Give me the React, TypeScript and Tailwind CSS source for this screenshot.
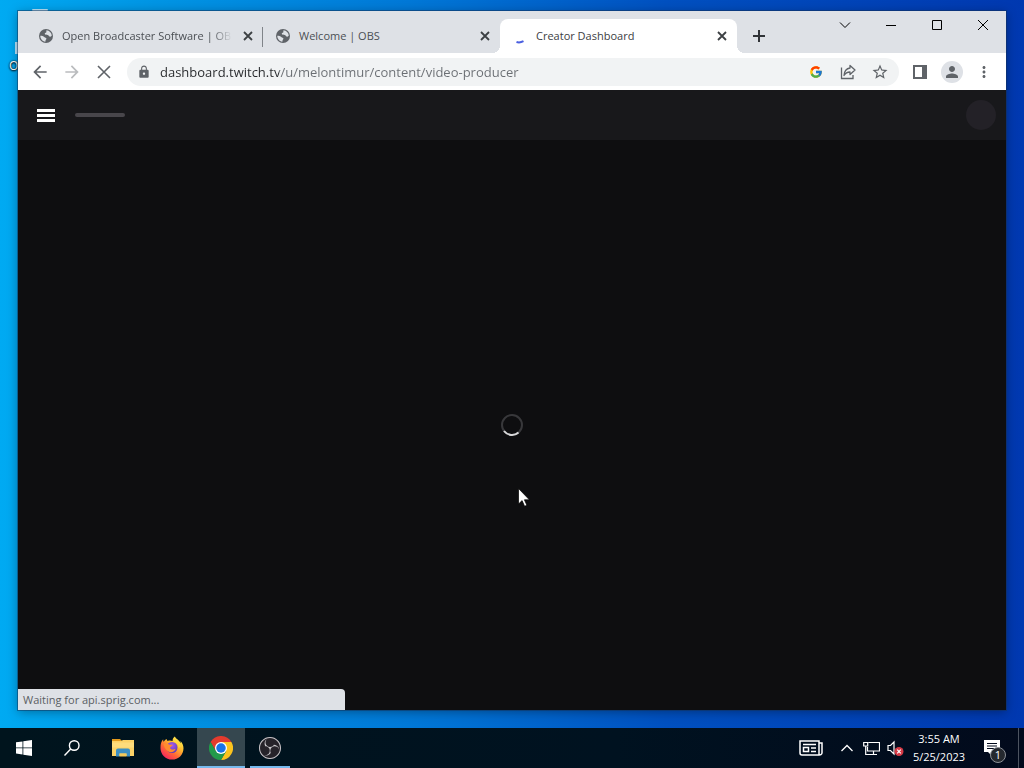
import type { ReactNode } from "react";
import { FcGoogle } from "react-icons/fc";
import {
  MdArrowBack,
  MdArrowForward,
  MdLock,
  MdMoreVert,
  MdPerson,
  MdStarBorder,
} from "react-icons/md";
import { SiObsstudio } from "react-icons/si";

function GlobeIcon() {
  return (
    <svg viewBox="0 0 16 16" className="size-4">
      <circle cx="8" cy="8" r="7" fill="#5f6368" />
      <path d="M8.500 2.300c2.900.2 5 2.400 5.300 5.200-.8.900-1.400 1.500-2.300 1.100-.8-.4-.7-1.500-1.700-1.700-1.200-.2-2.600.2-3-.8-.3-.9.700-1.200 1.400-1.600.6-.4-.2-1.400.3-2.200z" fill="#dee1e6" />
      <path d="M2.300 7.800c1.600.1 3.200.3 4 1.200.8.800 1.900.7 2.100 1.600.2.800-.8 1.300-.9 2.100-.1.500.1.900-.3 1-2.800-.4-4.900-2.800-4.900-5.900z" fill="#dee1e6" />
    </svg>
  );
}

function Tab({ title, icon, active = false, divider = false }: { title: string; icon: ReactNode; active?: boolean; divider?: boolean }) {
  return (
    <div
      role="tab"
      aria-selected={active}
      className={`relative flex h-full w-[237px] shrink items-center rounded-t-lg pr-[7px] pl-3 ${active ? "bg-white" : ""}`}
    >
      {active && (
        <>
          <span className="absolute bottom-0 -left-2 size-2 bg-[radial-gradient(circle_at_0_0,#dee1e6_8px,white_8px)]" />
          <span className="absolute -right-2 bottom-0 size-2 bg-[radial-gradient(circle_at_100%_0,#dee1e6_8px,white_8px)]" />
        </>
      )}
      <span className="flex size-4 shrink-0 items-center justify-center">{icon}</span>
      <span className={`ml-2 min-w-0 flex-1 text-[11px] leading-4 whitespace-nowrap ${active ? "text-[#3c4043]" : "text-[#4b4f54]"} ${divider ? "[mask-image:linear-gradient(to_right,black_88%,transparent)]" : ""}`}>
        {title}
      </span>
      <button aria-label={`Close ${title}`} className="ml-2 flex size-4 shrink-0 items-center justify-center text-[#3c4043]">
        <svg viewBox="0 0 16 16" className="size-4" stroke="currentColor" strokeWidth="1.800">
          <path d="M4 4l8 8M12 4l-8 8" />
        </svg>
      </button>
      {divider && <span className="absolute top-2 right-0 h-5 w-px bg-[#808489]" />}
    </div>
  );
}

function WindowButton({ label, path }: { label: string; path: string }) {
  return (
    <button aria-label={label} className="flex h-7 w-[46px] items-center justify-center text-black">
      <svg viewBox="0 0 12 12" className="size-3" fill="none" stroke="currentColor" strokeWidth="1">
        <path d={path} />
      </svg>
    </button>
  );
}

function ToolButton({ label, children, dim = false }: { label: string; children: ReactNode; dim?: boolean }) {
  return (
    <button aria-label={label} className={`flex h-7 w-8 shrink-0 items-center justify-center ${dim ? "text-[#babcbe]" : "text-[#5f6368]"}`}>
      {children}
    </button>
  );
}

function TaskButton({ label, children, state = "" }: { label: string; children: ReactNode; state?: "" | "active" | "open" }) {
  return (
    <button
      aria-label={label}
      className={`relative flex h-10 w-12 items-center justify-center text-white ${state === "active" ? "bg-[#35474f]" : ""}`}
    >
      {children}
      {state === "active" && <span className="absolute inset-x-0 bottom-0 h-0.5 bg-[#76b9ed]" />}
      {state === "open" && <span className="absolute inset-x-1 bottom-0 h-0.5 bg-[#76b9ed]" />}
    </button>
  );
}

function FolderIcon() {
  return (
    <svg viewBox="0 0 22 20" className="h-5 w-[22px]">
      <path d="M0 1h8l2 2H0z" fill="#e39a1c" />
      <path d="M0 3h9l2-1h11v16H0z" fill="#fbd267" />
      <path d="M0 4.500h22v5H0z" fill="#fddc7c" />
      <path d="M4 18.500v-6a2 2 0 0 1 2-2h10a2 2 0 0 1 2 2v6h-3.500v-3h-7v3z" fill="#3b8fc4" />
      <path d="M7.500 15.500h7v3h-7z" fill="#f3c95c" />
    </svg>
  );
}

function FirefoxIcon() {
  return (
    <svg viewBox="0 0 24 24" className="size-6">
      <defs>
        <linearGradient id="fox" x1="0.85" y1="0.1" x2="0.2" y2="0.95">
          <stop offset="0" stopColor="#fff14f" />
          <stop offset="0.35" stopColor="#ffb42e" />
          <stop offset="0.65" stopColor="#ff6636" />
          <stop offset="1" stopColor="#f5245f" />
        </linearGradient>
        <radialGradient id="orb" cx="0.5" cy="0.3" r="0.7">
          <stop offset="0" stopColor="#a45bf0" />
          <stop offset="1" stopColor="#5b3ab4" />
        </radialGradient>
      </defs>
      <path
        d="M14.800 0.500c-1.600 1.100-2.300 2.900-2.200 4.600-1.600-.8-3.500-.9-4.800-.2C7 4.300 6.700 3.700 6.700 2.900 5.300 3.600 4.300 4.800 3.800 5.700 3.200 5.100 3.100 4.100 3.200 3.300 1.200 5.200.4 8.300.5 12A11.500 11.500 0 0 0 12 23.600c6.400 0 11.500-4.900 11.500-11.400 0-2.800-1.200-5.800-3.100-7.300.3.800.4 1.600.4 2.300-1.500-3.200-4.900-4.100-6-6.700z"
        fill="url(#fox)"
      />
      <circle cx="12" cy="11.500" r="5.500" fill="url(#orb)" />
      <path d="M3.500 8.200c2.700-1 4.600-.5 6.200.5h3.100c-.2 1.300-2.500 1.500-2.800 3.200 1 1.600 3.200 2.200 5.600.9-1.100 3.200-5 4.500-8 2.200C5 13.300 4.300 10.600 3.500 8.200z" fill="#ff8b2f" />
      <path d="M13.500 5.500c3.500 1 5.200 3.300 5 6.500l2.300-1.500c-.6-3-3-4.700-5.300-6.800z" fill="#ffd83f" />
    </svg>
  );
}

function ChromeIcon() {
  return (
    <svg viewBox="0 0 48 48" className="size-6">
      <path d="M24 12h20.800A24 24 0 0 0 3.200 12l10.400 18z" fill="#e33b2e" />
      <path d="M34.400 30 24 48a24 24 0 0 0 20.800-36H24z" fill="#fcc31e" />
      <path d="M13.600 30 3.200 12A24 24 0 0 0 24 48l10.400-18z" fill="#229a4a" />
      <circle cx="24" cy="24" r="12" fill="#fff" />
      <circle cx="24" cy="24" r="9.500" fill="#1a73e8" />
    </svg>
  );
}

function TrayIcons() {
  return (
    <>
      <button aria-label="News and interests" className="flex h-10 w-8 items-center justify-center">
        <svg viewBox="0 0 24 16" className="h-4 w-6" fill="none" stroke="currentColor" strokeWidth="1.500">
          <path d="M1 1h19v14H3a2 2 0 0 1-2-2zM20 3h3v10a2 2 0 0 1-3 1.500M4 4.500h13M12 8h5M12 11.500h5" />
          <path d="M4.500 7.500h5v4h-5z" />
        </svg>
      </button>
      <button aria-label="Show hidden icons" className="ml-2 flex h-10 w-6 items-center justify-center">
        <svg viewBox="0 0 12 12" className="size-3" fill="none" stroke="currentColor" strokeWidth="1.300">
          <path d="M.5 9 6 3.500 11.500 9" />
        </svg>
      </button>
      <button aria-label="Network" className="flex h-10 w-6 items-center justify-center">
        <svg viewBox="0 0 17 15" className="h-[15px] w-[17px]" fill="none" stroke="currentColor" strokeWidth="1.200">
          <path d="M5.500 1.500h11v8.500H4.500V6M10.500 10v3.500M6 13.500h8M.7 1.500h4v3.500h-4zM2.700 5v8.500h3.300" />
        </svg>
      </button>
      <button aria-label="Volume muted" className="flex h-10 w-6 items-center justify-center">
        <svg viewBox="0 0 17 16" className="h-4 w-[17px]" fill="none">
          <path d="M1 5.500h2.500L7 2v12l-3.500-3.500H1z" stroke="white" strokeWidth="1.200" />
          <circle cx="12" cy="11.500" r="4.500" fill="#d63a46" />
          <path d="m10.200 9.700 3.600 3.600m0-3.600-3.600 3.600" stroke="white" strokeWidth="1.200" />
        </svg>
      </button>
    </>
  );
}

export default function App() {
  return (
    <div className="flex min-h-screen flex-col bg-[#0078d4] font-['Open_Sans',sans-serif]">
      <div className="relative flex flex-1 flex-col bg-[linear-gradient(90deg,#00aaf2_0%,#0095e4_15%,#0078d7_40%,#0050c0_65%,#0038b0_100%)] px-[18px] pt-[11px] pb-[18px]">
        <span className="absolute top-[58px] left-[9px] text-xs leading-4 text-white [text-shadow:0_0_2px_black,0_1px_2px_black]">O</span>
        <span className="absolute top-[42px] left-[15px] h-3 w-[3px] bg-[#b9e3fa]" />
        <span className="absolute top-[9px] left-8 h-0.5 w-4 rounded-full bg-[#b9e3fa]" />

        <div className="relative flex flex-1 flex-col bg-[#0e0e10] shadow-[0_0_0_1px_rgba(20,50,90,0.5),0_2px_10px_rgba(0,0,0,0.35)]">
          <div className="flex h-[42px] bg-[#dee1e6]">
            <div role="tablist" className="flex min-w-0 pt-2 pl-2">
              <Tab title="Open Broadcaster Software | OB" icon={<GlobeIcon />} divider />
              <Tab title="Welcome | OBS" icon={<GlobeIcon />} />
              <Tab
                title="Creator Dashboard"
                active
                icon={
                  <svg viewBox="0 0 16 16" className="size-4" fill="none" stroke="#4a5fe0" strokeWidth="2">
                    <path d="M4.500 14c2.500.8 4.500.5 7-.8" />
                  </svg>
                }
              />
            </div>
            <button aria-label="New tab" className="mt-[11px] ml-2 flex size-7 shrink-0 items-center justify-center text-[#303337]">
              <svg viewBox="0 0 12 12" className="size-3" stroke="currentColor" strokeWidth="2">
                <path d="M6 0v12M0 6h12" />
              </svg>
            </button>
            <div className="ml-auto flex shrink-0">
              <WindowButton label="Search tabs" path="M1 3.500l5 5 5-5" />
              <WindowButton label="Minimize" path="M1 6.500h10" />
              <WindowButton label="Maximize" path="M1.500 1.500h9v9h-9z" />
              <WindowButton label="Close window" path="M1 1l10 10M11 1L1 11" />
            </div>
          </div>

          <div className="flex h-[37px] items-center bg-white px-1.5">
            <ToolButton label="Back"><MdArrowBack size={20} /></ToolButton>
            <ToolButton label="Forward" dim><MdArrowForward size={20} /></ToolButton>
            <ToolButton label="Stop loading">
              <svg viewBox="0 0 14 14" className="size-3.5" stroke="currentColor" strokeWidth="1.600">
                <path d="M1 1l12 12M13 1L1 13" />
              </svg>
            </ToolButton>
            <div className="ml-[7px] flex h-7 min-w-0 flex-1 items-center rounded-full bg-[#f1f3f4] pr-[3px] pl-2.5">
              <MdLock size={14} className="shrink-0 text-[#5f6368]" />
              <input
                aria-label="Address"
                readOnly
                value="dashboard.twitch.tv/u/melontimur/content/video-producer"
                className="ml-[9px] min-w-0 flex-1 bg-[linear-gradient(90deg,#26282b_119px,#6a6e73_119px)] bg-clip-text text-[13px] leading-5 text-transparent outline-none"
              />
              <ToolButton label="Search with Google"><FcGoogle size={14} /></ToolButton>
              <ToolButton label="Share this page">
                <svg viewBox="0 0 16 16" className="size-4" fill="none" stroke="currentColor" strokeWidth="1.300">
                  <path d="M1.500 3.500v11h11.500v-3.500" />
                  <path d="M10 1.500 15 6l-5 4.500V8C7.500 8 5.500 9 4 11.500 4.300 7.500 6.500 4.500 10 4z" strokeLinejoin="round" />
                </svg>
              </ToolButton>
              <ToolButton label="Bookmark this tab"><MdStarBorder size={18} /></ToolButton>
            </div>
            <div className="ml-[5px] flex shrink-0">
              <ToolButton label="Side panel">
                <svg viewBox="0 0 14 14" className="size-3.5">
                  <path d="M1 1h12v12H1z" fill="none" stroke="currentColor" strokeWidth="2" />
                  <path d="M9 1h4v12H9z" fill="currentColor" />
                </svg>
              </ToolButton>
              <ToolButton label="Profile">
                <span className="flex size-[22px] items-center justify-center rounded-full bg-[#dee1e6]"><MdPerson size={18} /></span>
              </ToolButton>
              <ToolButton label="Chrome menu"><MdMoreVert size={18} /></ToolButton>
            </div>
          </div>

          <header className="flex h-[50px] items-center bg-[#18181b] pr-2.5 pl-[19px]">
            <button aria-label="Open navigation" className="flex w-[18px] flex-col gap-0.5">
              <span className="h-[3px] bg-white" />
              <span className="h-[3px] bg-white" />
              <span className="h-[3px] bg-white" />
            </button>
            <span className="ml-5 h-1 w-[50px] rounded-full bg-[#48464b]" />
            <span className="ml-auto size-[30px] rounded-full bg-[#232127]" />
          </header>

          <main className="flex flex-1 items-center justify-center">
            <svg role="img" aria-label="Loading" viewBox="0 0 24 24" className="size-6" fill="none">
              <circle cx="12" cy="12" r="10" stroke="#38383b" strokeWidth="2" />
              <path d="M4 18a10 10 0 0 0 14.500 1.500" stroke="#d8d8da" strokeWidth="2" />
            </svg>
          </main>

          <div className="absolute bottom-0 left-0 h-[21px] w-[327px] rounded-tr bg-[#dee1e6] pl-[5px] text-[11px] leading-[21px] text-[#5a5e63]">
            Waiting for api.sprig.com...
          </div>
        </div>

        <svg viewBox="0 0 12 19" className="absolute top-[488px] left-[518px] h-[19px] w-3">
          <path d="M.5.500v15.500l3.600-3.400 2.500 5.700 2.300-1-2.500-5.500h5z" fill="white" stroke="black" strokeWidth="0.700" />
        </svg>
      </div>

      <footer className="flex h-10 items-center bg-[linear-gradient(90deg,#00141d_0%,#001220_60%,#020a1c_100%)] text-white">
        <TaskButton label="Start">
          <svg viewBox="0 0 16 16" className="size-4" fill="currentColor">
            <path d="M0 2.300 6.500 1.400v6.100H0zM7.300 1.300 16 0v7.500H7.300zM0 8.300h6.500v6.200L0 13.600zM7.300 8.300H16V16l-8.700-1.300z" />
          </svg>
        </TaskButton>
        <TaskButton label="Search">
          <svg viewBox="0 0 16 16" className="size-4" fill="none" stroke="currentColor" strokeWidth="1.400">
            <circle cx="10.200" cy="5.500" r="4.800" />
            <path d="M6.700 9 .5 15.500" />
          </svg>
        </TaskButton>
        <div className="ml-[3px] flex gap-px">
          <TaskButton label="File Explorer"><FolderIcon /></TaskButton>
          <TaskButton label="Firefox"><FirefoxIcon /></TaskButton>
          <TaskButton label="Google Chrome" state="active"><ChromeIcon /></TaskButton>
          <TaskButton label="OBS Studio" state="open">
            <span className="flex size-[22px] items-center justify-center rounded-full bg-[#26232a] text-[#c8c6ca]">
              <SiObsstudio size={22} />
            </span>
          </TaskButton>
        </div>
        <div className="ml-auto flex items-center">
          <TrayIcons />
          <button className="ml-[5px] flex w-[54px] flex-col items-center text-[11px] leading-[18px] whitespace-nowrap">
            <span>3:55 AM</span>
            <span>5/25/2023</span>
          </button>
          <button aria-label="Notifications" className="relative flex h-10 w-[52px] items-center justify-center">
            <svg viewBox="0 0 16 16" className="size-4">
              <path d="M0 0h16v12H8v4l-4-4H0z" fill="white" />
              <path d="M3 3.500h10M3 6h10M3 8.500h7" stroke="#020a1c" />
            </svg>
            <span className="absolute top-[19px] left-6 flex size-4 items-center justify-center rounded-full border border-[#8d9197] bg-[#25292f] text-[11px] leading-3">1</span>
          </button>
          <span className="mr-[5px] h-10 w-px bg-[#4c5360]" />
        </div>
      </footer>
    </div>
  );
}
